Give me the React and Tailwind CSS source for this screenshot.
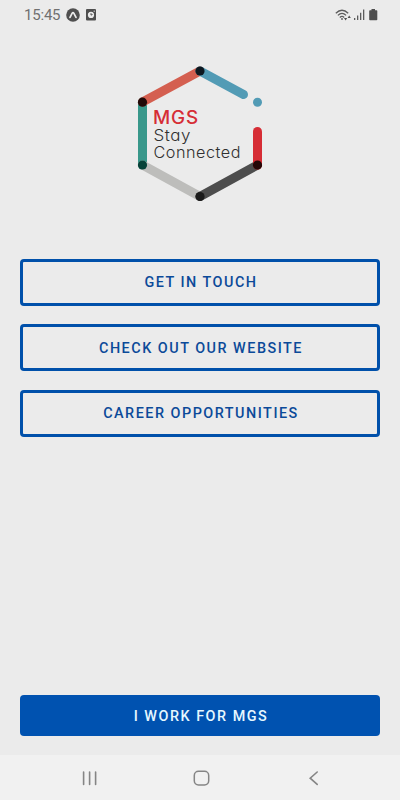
const links = ["Get in touch", "Check out our website", "Career opportunities"];

function StatusBar() {
  return (
    <header className="flex h-[29px] items-center justify-between pl-6 pr-[22px] text-[#5c5c5c]">
      <div className="flex items-center">
        <span className="w-[37px] whitespace-nowrap pt-px text-[15px] leading-none tracking-[-0.2px] text-[#707070]">15:45</span>
        <svg className="ml-[5px]" width="14" height="14" viewBox="0 0 14 14">
          <circle cx="7" cy="7" r="6.8" fill="#4f4f4f" />
          <path d="M4 9.4 6.2 5.2Q7 4 7.8 5.2L10 9.4" fill="none" stroke="#ebebeb" strokeWidth="1.7" strokeLinecap="round" />
        </svg>
        <svg className="ml-[6px]" width="10" height="12" viewBox="0 0 10 12">
          <rect width="10" height="11.6" rx="1" fill="#4f4f4f" />
          <circle cx="5" cy="5.9" r="3.1" fill="#ebebeb" />
          <path d="M5 4.2V6.1L6.5 5.5M2.4 3.3 3.5 2.5M7.6 3.3 6.5 2.5" fill="none" stroke="#4f4f4f" strokeWidth="1" />
          <circle cx="8.2" cy="2.2" r=".6" fill="#ebebeb" />
        </svg>
      </div>

      <div className="flex items-center">
        <svg width="17" height="14" viewBox="0 0 17 14" fill="none" stroke="#5c5c5c" strokeWidth="1.3">
          <path d="M.8 5.2Q7 -.8 13.2 5.2M2.9 7.4Q7 3.3 11.1 7.4M4.8 9.4Q7 7.4 9.2 9.4" />
          <circle cx="7" cy="11" r=".9" fill="#5c5c5c" stroke="none" />
          <path d="M9 9.9h3.2l-1.6 2.6zM12.6 9.9h3.2L14.2 7.4z" fill="#4f4f4f" stroke="none" />
        </svg>
        <svg className="ml-[2px]" width="11" height="12" viewBox="0 0 11 12" fill="#5c5c5c">
          <path d="M0 9h1.3v2H0zM3 6.5h1.3V11H3zM6 3.7h1.3V11H6zM9 .5h1.3V11H9z" />
        </svg>
        <svg className="ml-[4px]" width="9" height="12" viewBox="0 0 9 12" fill="#4f4f4f">
          <path d="M2.5 0h3.5v1.2h1.5q.8 0 .8.8v8.4q0 .8-.8.8H1q-.8 0-.8-.8V2q0-.8.8-.8h1.5z" />
        </svg>
      </div>
    </header>
  );
}

function Logo() {
  return (
    <svg className="mx-auto mt-[31px] block shrink-0" width="140" height="145" viewBox="130 60 140 145">
      <g strokeWidth="9" strokeLinecap="round">
        <path d="M142.5 102V165" stroke="#39988b" />
        <path d="M142.5 165 200 196.5" stroke="#bdbdbb" />
        <path d="M200 196.5 257.5 165" stroke="#4d4d4d" />
        <path d="M257.5 165V131.5" stroke="#d62d35" />
        <path d="M142.5 102 200 71" stroke="#d45f50" />
        <path d="M200 71 243.5 94.5" stroke="#529bb5" />
      </g>
      <circle cx="257.5" cy="102.2" r="4.5" fill="#529bb5" />

      {/* Joints */}
      <circle cx="200" cy="71" r="4.6" fill="#0d1820" />
      <circle cx="142.5" cy="102.2" r="4.6" fill="#210908" />
      <circle cx="142.5" cy="165" r="4.6" fill="#064339" />
      <circle cx="200" cy="196.5" r="4.6" fill="#1b1b1b" />
      <circle cx="257.5" cy="165" r="4.6" fill="#250606" />

      <g className="font-['Inter',sans-serif] [font-feature-settings:'cv11'_1]">
        <text x="153" y="124.3" textLength="46" lengthAdjust="spacingAndGlyphs" className="fill-[#d62d35] text-[18px] font-medium tracking-[0.8px]">MGS</text>
        <text x="153.5" y="140.6" textLength="37.5" lengthAdjust="spacingAndGlyphs" className="fill-[#303030] text-[15.5px] font-light tracking-[0.5px]">Stay</text>
        <text x="153.5" y="157.6" textLength="87.5" lengthAdjust="spacingAndGlyphs" className="fill-[#303030] text-[15.5px] font-light tracking-[0.5px]">Connected</text>
      </g>
    </svg>
  );
}

function NavBar() {
  return (
    <nav className="flex h-[45px] items-center justify-between bg-[#f1f1f1] pl-[81px] pr-[80px]">
      <svg width="17" height="16" viewBox="0 0 17 16" stroke="#858585" strokeWidth="1.6" strokeLinecap="round">
        <path d="M2.6 2V14.4M8.6 2V14.4M14.6 2V14.4" />
      </svg>
      <svg className="mr-1" width="17" height="17" viewBox="0 0 17 17" fill="none" stroke="#858585" strokeWidth="1.5">
        <rect x="1.3" y="2.3" width="14.4" height="13.6" rx="4.2" />
      </svg>
      <svg width="12" height="16" viewBox="0 0 12 16" fill="none" stroke="#858585" strokeWidth="1.6" strokeLinecap="round">
        <path d="M9.2 2 2.2 8.2 9.2 14.4" />
      </svg>
    </nav>
  );
}

export default function App() {
  return (
    <div className="flex h-[800px] w-[400px] flex-col bg-[#ebebeb] font-['Roboto',sans-serif]">
      <StatusBar />
      <Logo />

      <main className="mt-[53.8px] flex flex-col gap-[18.4px] px-[19.6px]">
        {links.map((label) => (
          <button
            key={label}
            className="h-[47px] rounded-[4px] border-[3px] border-[#0050aa] pl-[2px] pt-[2px] text-[14.4px] font-medium uppercase tracking-[1.5px] text-[#0b4a99]"
          >
            {label}
          </button>
        ))}
      </main>

      <div className="mt-auto px-[19.6px] pb-[19px]">
        <button className="h-[41px] w-full rounded-[4px] bg-[#0052b0] pl-[2px] pt-[2px] text-[14.4px] font-medium uppercase tracking-[1.5px] text-[#e6f8ff]">
          I work for MGS
        </button>
      </div>
      <NavBar />
    </div>
  );
}
